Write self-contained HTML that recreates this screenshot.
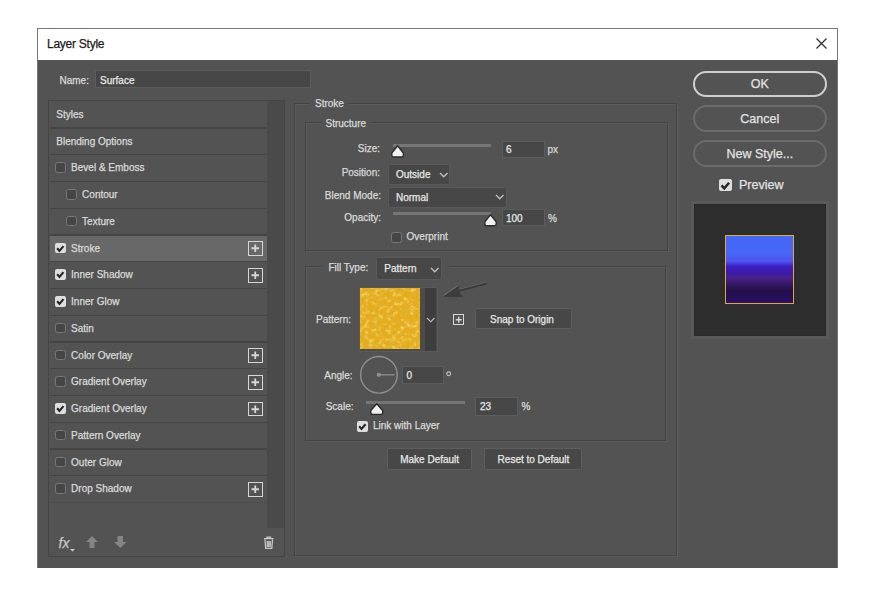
<!DOCTYPE html>
<html><head><meta charset="utf-8"><style>
html,body{margin:0;padding:0;background:#ffffff;}
body{width:875px;height:597px;position:relative;overflow:hidden;font-family:"Liberation Sans",sans-serif;}
div{-webkit-text-stroke:0.25px currentColor;}
</style></head><body>
<div style="position:absolute;left:37.00px;top:28.00px;width:801.00px;height:540.00px;box-sizing:border-box;background:#535353;border:1px solid #767676;border-bottom:none;"></div>
<div style="position:absolute;left:38.00px;top:29.00px;width:799.00px;height:31.00px;background:#ffffff;"></div>
<div style="position:absolute;top:38.14px;font-size:12px;line-height:12px;color:#1c1c1c;white-space:nowrap;letter-spacing:-0.25px;left:47.00px;">Layer Style</div>
<svg style="position:absolute;left:816.00px;top:38.00px;overflow:visible" width="11" height="11" viewBox="0 0 11 11"><path d="M0.5 0.5L10.5 10.5M10.5 0.5L0.5 10.5" stroke="#2b2b2b" stroke-width="1.2"/></svg>
<div style="position:absolute;top:75.53px;font-size:10px;line-height:10px;color:#dadada;white-space:nowrap;left:59.50px;">Name:</div>
<div style="position:absolute;left:95.00px;top:70.20px;width:216.00px;height:18.20px;box-sizing:border-box;background:#474747;border:1px solid #5c5c5c;"></div>
<div style="position:absolute;top:75.63px;font-size:10px;line-height:10px;color:#e8e8e8;white-space:nowrap;left:100.00px;">Surface</div>
<div style="position:absolute;left:48.00px;top:99.50px;width:237.00px;height:457.50px;box-sizing:border-box;border:1px solid #454545;"></div>
<div style="position:absolute;left:266.60px;top:101.00px;width:17.00px;height:427.00px;background:#4a4a4a;"></div>
<div style="position:absolute;left:50.00px;top:127.25px;width:216.60px;height:1.30px;background:#454545;"></div>
<div style="position:absolute;top:109.94px;font-size:10px;line-height:10px;color:#dadada;white-space:nowrap;left:56.30px;">Styles</div>
<div style="position:absolute;left:50.00px;top:154.00px;width:216.60px;height:1.30px;background:#454545;"></div>
<div style="position:absolute;top:136.69px;font-size:10px;line-height:10px;color:#dadada;white-space:nowrap;left:56.30px;">Blending Options</div>
<div style="position:absolute;left:50.00px;top:180.75px;width:216.60px;height:1.30px;background:#454545;"></div>
<div style="position:absolute;left:55.30px;top:162.30px;width:10.60px;height:10.60px;box-sizing:border-box;background:#464646;border:1.4px solid #787878;border-radius:2.5px;"></div>
<div style="position:absolute;top:163.44px;font-size:10px;line-height:10px;color:#dadada;white-space:nowrap;left:71.10px;">Bevel &amp; Emboss</div>
<div style="position:absolute;left:50.00px;top:207.50px;width:216.60px;height:1.30px;background:#454545;"></div>
<div style="position:absolute;left:66.30px;top:189.05px;width:10.60px;height:10.60px;box-sizing:border-box;background:#464646;border:1.4px solid #787878;border-radius:2.5px;"></div>
<div style="position:absolute;top:190.19px;font-size:10px;line-height:10px;color:#dadada;white-space:nowrap;left:82.10px;">Contour</div>
<div style="position:absolute;left:50.00px;top:234.25px;width:216.60px;height:1.30px;background:#454545;"></div>
<div style="position:absolute;left:66.30px;top:215.80px;width:10.60px;height:10.60px;box-sizing:border-box;background:#464646;border:1.4px solid #787878;border-radius:2.5px;"></div>
<div style="position:absolute;top:216.94px;font-size:10px;line-height:10px;color:#dadada;white-space:nowrap;left:82.10px;">Texture</div>
<div style="position:absolute;left:50.00px;top:235.75px;width:216.60px;height:25.75px;background:#686868;"></div>
<div style="position:absolute;left:50.00px;top:261.00px;width:216.60px;height:1.30px;background:#454545;"></div>
<div style="position:absolute;left:55.30px;top:242.55px;width:10.60px;height:10.60px;background:#dedede;border-radius:2px;"></div>
<svg style="position:absolute;left:55.30px;top:242.55px;overflow:visible" width="10.6" height="10.6" viewBox="0 0 10.6 10.6"><path d="M2.12 5.30 L4.45 7.84 L8.48 3.18" fill="none" stroke="#262626" stroke-width="2.12"/></svg>
<div style="position:absolute;top:243.69px;font-size:10px;line-height:10px;color:#dadada;white-space:nowrap;left:71.10px;">Stroke</div>
<div style="position:absolute;left:248.00px;top:241.25px;width:14.50px;height:14.50px;box-sizing:border-box;border:1.5px solid #d6d6d6;"></div>
<svg style="position:absolute;left:248.00px;top:241.25px;overflow:visible" width="14.5" height="14.5" viewBox="0 0 14.5 14.5"><path d="M3.48 7.25H11.02M7.25 3.48V11.02" stroke="#d6d6d6" stroke-width="1.8" fill="none"/></svg>
<div style="position:absolute;left:50.00px;top:287.75px;width:216.60px;height:1.30px;background:#454545;"></div>
<div style="position:absolute;left:55.30px;top:269.30px;width:10.60px;height:10.60px;background:#dedede;border-radius:2px;"></div>
<svg style="position:absolute;left:55.30px;top:269.30px;overflow:visible" width="10.6" height="10.6" viewBox="0 0 10.6 10.6"><path d="M2.12 5.30 L4.45 7.84 L8.48 3.18" fill="none" stroke="#262626" stroke-width="2.12"/></svg>
<div style="position:absolute;top:270.44px;font-size:10px;line-height:10px;color:#dadada;white-space:nowrap;left:71.10px;">Inner Shadow</div>
<div style="position:absolute;left:248.00px;top:268.00px;width:14.50px;height:14.50px;box-sizing:border-box;border:1.5px solid #d6d6d6;"></div>
<svg style="position:absolute;left:248.00px;top:268.00px;overflow:visible" width="14.5" height="14.5" viewBox="0 0 14.5 14.5"><path d="M3.48 7.25H11.02M7.25 3.48V11.02" stroke="#d6d6d6" stroke-width="1.8" fill="none"/></svg>
<div style="position:absolute;left:50.00px;top:314.50px;width:216.60px;height:1.30px;background:#454545;"></div>
<div style="position:absolute;left:55.30px;top:296.05px;width:10.60px;height:10.60px;background:#dedede;border-radius:2px;"></div>
<svg style="position:absolute;left:55.30px;top:296.05px;overflow:visible" width="10.6" height="10.6" viewBox="0 0 10.6 10.6"><path d="M2.12 5.30 L4.45 7.84 L8.48 3.18" fill="none" stroke="#262626" stroke-width="2.12"/></svg>
<div style="position:absolute;top:297.19px;font-size:10px;line-height:10px;color:#dadada;white-space:nowrap;left:71.10px;">Inner Glow</div>
<div style="position:absolute;left:50.00px;top:341.25px;width:216.60px;height:1.30px;background:#454545;"></div>
<div style="position:absolute;left:55.30px;top:322.80px;width:10.60px;height:10.60px;box-sizing:border-box;background:#464646;border:1.4px solid #787878;border-radius:2.5px;"></div>
<div style="position:absolute;top:323.94px;font-size:10px;line-height:10px;color:#dadada;white-space:nowrap;left:71.10px;">Satin</div>
<div style="position:absolute;left:50.00px;top:368.00px;width:216.60px;height:1.30px;background:#454545;"></div>
<div style="position:absolute;left:55.30px;top:349.55px;width:10.60px;height:10.60px;box-sizing:border-box;background:#464646;border:1.4px solid #787878;border-radius:2.5px;"></div>
<div style="position:absolute;top:350.69px;font-size:10px;line-height:10px;color:#dadada;white-space:nowrap;left:71.10px;">Color Overlay</div>
<div style="position:absolute;left:248.00px;top:348.25px;width:14.50px;height:14.50px;box-sizing:border-box;border:1.5px solid #d6d6d6;"></div>
<svg style="position:absolute;left:248.00px;top:348.25px;overflow:visible" width="14.5" height="14.5" viewBox="0 0 14.5 14.5"><path d="M3.48 7.25H11.02M7.25 3.48V11.02" stroke="#d6d6d6" stroke-width="1.8" fill="none"/></svg>
<div style="position:absolute;left:50.00px;top:394.75px;width:216.60px;height:1.30px;background:#454545;"></div>
<div style="position:absolute;left:55.30px;top:376.30px;width:10.60px;height:10.60px;box-sizing:border-box;background:#464646;border:1.4px solid #787878;border-radius:2.5px;"></div>
<div style="position:absolute;top:377.44px;font-size:10px;line-height:10px;color:#dadada;white-space:nowrap;left:71.10px;">Gradient Overlay</div>
<div style="position:absolute;left:248.00px;top:375.00px;width:14.50px;height:14.50px;box-sizing:border-box;border:1.5px solid #d6d6d6;"></div>
<svg style="position:absolute;left:248.00px;top:375.00px;overflow:visible" width="14.5" height="14.5" viewBox="0 0 14.5 14.5"><path d="M3.48 7.25H11.02M7.25 3.48V11.02" stroke="#d6d6d6" stroke-width="1.8" fill="none"/></svg>
<div style="position:absolute;left:50.00px;top:421.50px;width:216.60px;height:1.30px;background:#454545;"></div>
<div style="position:absolute;left:55.30px;top:403.05px;width:10.60px;height:10.60px;background:#dedede;border-radius:2px;"></div>
<svg style="position:absolute;left:55.30px;top:403.05px;overflow:visible" width="10.6" height="10.6" viewBox="0 0 10.6 10.6"><path d="M2.12 5.30 L4.45 7.84 L8.48 3.18" fill="none" stroke="#262626" stroke-width="2.12"/></svg>
<div style="position:absolute;top:404.19px;font-size:10px;line-height:10px;color:#dadada;white-space:nowrap;left:71.10px;">Gradient Overlay</div>
<div style="position:absolute;left:248.00px;top:401.75px;width:14.50px;height:14.50px;box-sizing:border-box;border:1.5px solid #d6d6d6;"></div>
<svg style="position:absolute;left:248.00px;top:401.75px;overflow:visible" width="14.5" height="14.5" viewBox="0 0 14.5 14.5"><path d="M3.48 7.25H11.02M7.25 3.48V11.02" stroke="#d6d6d6" stroke-width="1.8" fill="none"/></svg>
<div style="position:absolute;left:50.00px;top:448.25px;width:216.60px;height:1.30px;background:#454545;"></div>
<div style="position:absolute;left:55.30px;top:429.80px;width:10.60px;height:10.60px;box-sizing:border-box;background:#464646;border:1.4px solid #787878;border-radius:2.5px;"></div>
<div style="position:absolute;top:430.94px;font-size:10px;line-height:10px;color:#dadada;white-space:nowrap;left:71.10px;">Pattern Overlay</div>
<div style="position:absolute;left:50.00px;top:475.00px;width:216.60px;height:1.30px;background:#454545;"></div>
<div style="position:absolute;left:55.30px;top:456.55px;width:10.60px;height:10.60px;box-sizing:border-box;background:#464646;border:1.4px solid #787878;border-radius:2.5px;"></div>
<div style="position:absolute;top:457.69px;font-size:10px;line-height:10px;color:#dadada;white-space:nowrap;left:71.10px;">Outer Glow</div>
<div style="position:absolute;left:50.00px;top:501.75px;width:216.60px;height:1.30px;background:#4e4e4e;"></div>
<div style="position:absolute;left:55.30px;top:483.30px;width:10.60px;height:10.60px;box-sizing:border-box;background:#464646;border:1.4px solid #787878;border-radius:2.5px;"></div>
<div style="position:absolute;top:484.44px;font-size:10px;line-height:10px;color:#dadada;white-space:nowrap;left:71.10px;">Drop Shadow</div>
<div style="position:absolute;left:248.00px;top:482.00px;width:14.50px;height:14.50px;box-sizing:border-box;border:1.5px solid #d6d6d6;"></div>
<svg style="position:absolute;left:248.00px;top:482.00px;overflow:visible" width="14.5" height="14.5" viewBox="0 0 14.5 14.5"><path d="M3.48 7.25H11.02M7.25 3.48V11.02" stroke="#d6d6d6" stroke-width="1.8" fill="none"/></svg>
<div style="position:absolute;top:535.65px;font-size:14px;line-height:14px;color:#c8c8c8;white-space:nowrap;left:58.50px;font-family:"Liberation Serif",serif;"><i>fx</i></div>
<svg style="position:absolute;left:70.00px;top:548.50px;overflow:visible" width="5" height="2.5" viewBox="0 0 5 2.5"><path d="M0 0H5L2.5 2.5Z" fill="#d0d0d0"/></svg>
<svg style="position:absolute;left:86.00px;top:536.00px;overflow:visible" width="12" height="12" viewBox="0 0 12 12"><path d="M6 0L12 6H8.5V12H3.5V6H0Z" fill="#858585"/></svg>
<svg style="position:absolute;left:113.50px;top:536.00px;overflow:visible" width="12.5" height="12" viewBox="0 0 12.5 12"><path d="M6.25 12L12.5 6H9V0H3.5V6H0Z" fill="#858585"/></svg>
<svg style="position:absolute;left:262.50px;top:536.00px;overflow:visible" width="11.5" height="13" viewBox="0 0 11.5 13"><path d="M1 2.5H10.5M4 2.5V1H7.5V2.5M2 3.5L2.7 12.3H8.8L9.5 3.5M4.3 5V11M5.75 5V11M7.2 5V11" fill="none" stroke="#cacaca" stroke-width="1.25"/></svg>
<div style="position:absolute;left:294.20px;top:103.00px;width:383.30px;height:453.00px;box-sizing:border-box;border:1px solid #444444;box-shadow:inset 1px 1px 0 #5b5b5b, 1px 1px 0 #5b5b5b;"></div>
<div style="position:absolute;left:309.50px;top:100.00px;width:38.50px;height:10.00px;background:#535353;"></div>
<div style="position:absolute;top:99.33px;font-size:10px;line-height:10px;color:#dadada;white-space:nowrap;left:315.00px;">Stroke</div>
<div style="position:absolute;left:305.00px;top:122.20px;width:363.00px;height:129.30px;box-sizing:border-box;border:1px solid #444444;box-shadow:inset 1px 1px 0 #5b5b5b, 1px 1px 0 #5b5b5b;"></div>
<div style="position:absolute;left:321.00px;top:118.00px;width:49.00px;height:10.00px;background:#535353;"></div>
<div style="position:absolute;top:119.13px;font-size:10px;line-height:10px;color:#dadada;white-space:nowrap;left:325.50px;">Structure</div>
<div style="position:absolute;top:144.03px;font-size:10px;line-height:10px;color:#dadada;white-space:nowrap;right:495.00px;">Size:</div>
<div style="position:absolute;left:393.00px;top:143.90px;width:98.00px;height:3.00px;background:#767676;"></div>
<svg style="position:absolute;left:391.00px;top:145.00px;overflow:visible" width="13.199999999999989" height="12.800000000000011" viewBox="0 0 13.199999999999989 12.800000000000011"><path d="M6.60 0.8 L12.40 7.94 L12.40 10.30 Q12.40 12.00 10.70 12.00 L2.5 12.00 Q0.8 12.00 0.8 10.30 L0.8 7.94 Z" fill="#f0f0f0" stroke="#2c2c2c" stroke-width="1.4" stroke-linejoin="round"/></svg>
<div style="position:absolute;left:501.50px;top:140.50px;width:43.00px;height:17.50px;box-sizing:border-box;background:#474747;border:1px solid #5c5c5c;"></div>
<div style="position:absolute;top:145.03px;font-size:10px;line-height:10px;color:#e8e8e8;white-space:nowrap;left:506.00px;">6</div>
<div style="position:absolute;top:144.84px;font-size:10px;line-height:10px;color:#dadada;white-space:nowrap;left:547.50px;">px</div>
<div style="position:absolute;top:168.03px;font-size:10px;line-height:10px;color:#dadada;white-space:nowrap;right:495.00px;">Position:</div>
<div style="position:absolute;left:388.00px;top:164.00px;width:62.00px;height:20.50px;box-sizing:border-box;background:#474747;border:1px solid #5a5a5a;border-radius:2.5px;"></div>
<div style="position:absolute;top:169.84px;font-size:10px;line-height:10px;color:#e8e8e8;white-space:nowrap;left:396.00px;">Outside</div>
<svg style="position:absolute;left:439.55px;top:173.10px;overflow:visible" width="7.5" height="3.8" viewBox="0 0 7.5 3.8"><path d="M0 0L3.75 3.8L7.5 0" fill="none" stroke="#c0c0c0" stroke-width="1.35"/></svg>
<div style="position:absolute;top:190.53px;font-size:10px;line-height:10px;color:#dadada;white-space:nowrap;right:494.00px;">Blend Mode:</div>
<div style="position:absolute;left:388.00px;top:187.00px;width:118.50px;height:21.00px;box-sizing:border-box;background:#474747;border:1px solid #5a5a5a;border-radius:2.5px;"></div>
<div style="position:absolute;top:192.53px;font-size:10px;line-height:10px;color:#e8e8e8;white-space:nowrap;left:396.00px;">Normal</div>
<svg style="position:absolute;left:496.05px;top:195.10px;overflow:visible" width="7.5" height="3.8" viewBox="0 0 7.5 3.8"><path d="M0 0L3.75 3.8L7.5 0" fill="none" stroke="#c0c0c0" stroke-width="1.35"/></svg>
<div style="position:absolute;top:213.03px;font-size:10px;line-height:10px;color:#dadada;white-space:nowrap;right:494.00px;">Opacity:</div>
<div style="position:absolute;left:393.00px;top:211.70px;width:98.00px;height:3.00px;background:#767676;"></div>
<svg style="position:absolute;left:484.30px;top:213.50px;overflow:visible" width="13.0" height="12.5" viewBox="0 0 13.0 12.5"><path d="M6.50 0.8 L12.20 7.75 L12.20 10.00 Q12.20 11.70 10.50 11.70 L2.5 11.70 Q0.8 11.70 0.8 10.00 L0.8 7.75 Z" fill="#f0f0f0" stroke="#2c2c2c" stroke-width="1.4" stroke-linejoin="round"/></svg>
<div style="position:absolute;left:501.50px;top:208.50px;width:43.00px;height:17.50px;box-sizing:border-box;background:#474747;border:1px solid #5c5c5c;"></div>
<div style="position:absolute;top:213.84px;font-size:10px;line-height:10px;color:#e8e8e8;white-space:nowrap;left:506.00px;">100</div>
<div style="position:absolute;top:213.84px;font-size:10px;line-height:10px;color:#dadada;white-space:nowrap;left:548.00px;">%</div>
<div style="position:absolute;left:391.00px;top:232.00px;width:10.50px;height:10.50px;box-sizing:border-box;background:#464646;border:1.4px solid #787878;border-radius:2.5px;"></div>
<div style="position:absolute;top:231.53px;font-size:10px;line-height:10px;color:#dadada;white-space:nowrap;left:406.60px;">Overprint</div>
<div style="position:absolute;left:305.00px;top:265.50px;width:361.00px;height:175.00px;box-sizing:border-box;border:1px solid #444444;box-shadow:inset 1px 1px 0 #5b5b5b, 1px 1px 0 #5b5b5b;"></div>
<div style="position:absolute;left:322.00px;top:258.00px;width:127.00px;height:23.00px;background:#535353;"></div>
<div style="position:absolute;top:263.04px;font-size:10px;line-height:10px;color:#dadada;white-space:nowrap;left:328.40px;">Fill Type:</div>
<div style="position:absolute;left:375.80px;top:257.30px;width:66.40px;height:23.20px;box-sizing:border-box;background:#474747;border:1px solid #5a5a5a;border-radius:2.5px;"></div>
<div style="position:absolute;top:264.34px;font-size:10px;line-height:10px;color:#e8e8e8;white-space:nowrap;left:384.30px;">Pattern</div>
<svg style="position:absolute;left:431.25px;top:267.90px;overflow:visible" width="7.5" height="3.8" viewBox="0 0 7.5 3.8"><path d="M0 0L3.75 3.8L7.5 0" fill="none" stroke="#c0c0c0" stroke-width="1.35"/></svg>
<div style="position:absolute;top:315.04px;font-size:10px;line-height:10px;color:#dadada;white-space:nowrap;left:316.00px;">Pattern:</div>
<div style="position:absolute;left:358.60px;top:286.60px;width:79.60px;height:65.10px;box-sizing:border-box;background:#4c4c4c;border:1px solid #5a5a5a;"></div>
<svg style="position:absolute;left:360.00px;top:288.40px;overflow:visible" width="60" height="61" viewBox="0 0 60 61"><defs><filter id="tx" x="0" y="0" width="100%" height="100%"><feTurbulence type="fractalNoise" baseFrequency="0.22" numOctaves="3" seed="11"/><feColorMatrix type="matrix" values="0 0 0 0 0.97  0 0 0 0 0.8  0 0 0 0 0.24  2.2 0 0 0 -1.05"/></filter>
<filter id="tx2" x="0" y="0" width="100%" height="100%"><feTurbulence type="fractalNoise" baseFrequency="0.3" numOctaves="2" seed="3"/><feColorMatrix type="matrix" values="0 0 0 0 0.72  0 0 0 0 0.46  0 0 0 0 0.03  3 0 0 0 -1.3"/></filter></defs>
<rect width="60" height="61" fill="#e6aa1a"/><rect width="60" height="61" filter="url(#tx)"/><rect width="60" height="61" filter="url(#tx2)"/></svg>
<div style="position:absolute;left:425.20px;top:287.60px;width:11.30px;height:63.10px;background:#3e3e3e;"></div>
<svg style="position:absolute;left:427.05px;top:318.10px;overflow:visible" width="7.5" height="3.8" viewBox="0 0 7.5 3.8"><path d="M0 0L3.75 3.8L7.5 0" fill="none" stroke="#c0c0c0" stroke-width="1.1"/></svg>
<div style="position:absolute;left:452.90px;top:313.90px;width:11.50px;height:11.50px;box-sizing:border-box;border:1.1px solid #d8d8d8;"></div>
<svg style="position:absolute;left:452.90px;top:313.90px;overflow:visible" width="11.5" height="11.5" viewBox="0 0 11.5 11.5"><path d="M2.76 5.75H8.74M5.75 2.76V8.74" stroke="#d8d8d8" stroke-width="1.4000000000000001" fill="none"/></svg>
<div style="position:absolute;left:475.30px;top:307.50px;width:96.40px;height:21.90px;box-sizing:border-box;background:#474747;border:1px solid #5e5e5e;border-radius:2px;"></div>
<div style="position:absolute;top:314.94px;font-size:10px;line-height:10px;color:#e8e8e8;white-space:nowrap;left:490.00px;">Snap to Origin</div>
<svg style="position:absolute;left:440.00px;top:280.00px;overflow:visible" width="50" height="22" viewBox="0 0 50 22"><path d="M18 11L45.8 3.7" stroke="#727272" stroke-width="1" transform="translate(0,-1.1)"/><path d="M3.9 16.4L18.4 6.5" stroke="#767676" stroke-width="1" transform="translate(-0.6,-0.8)"/><path d="M18 11L45.8 3.7" stroke="#3c3c3c" stroke-width="2.2" stroke-linecap="round"/><path d="M3.9 16.4L18.4 6.5L18 11L22.4 16.7Z" fill="#3c3c3c" stroke="#3c3c3c" stroke-width="0.8" stroke-linejoin="round"/></svg>
<div style="position:absolute;top:370.54px;font-size:10px;line-height:10px;color:#dadada;white-space:nowrap;left:324.30px;">Angle:</div>
<svg style="position:absolute;left:359.00px;top:355.00px;overflow:visible" width="40" height="40" viewBox="0 0 40 40"><circle cx="19.9" cy="19.8" r="18.3" fill="none" stroke="#8f8f8f" stroke-width="1.4"/><circle cx="19.8" cy="19.8" r="2.1" fill="#8f8f8f"/><path d="M19.8 19.8H35.6" stroke="#8f8f8f" stroke-width="1.3"/></svg>
<div style="position:absolute;left:401.80px;top:365.60px;width:42.60px;height:18.10px;box-sizing:border-box;background:#474747;border:1px solid #5c5c5c;"></div>
<div style="position:absolute;top:370.54px;font-size:10px;line-height:10px;color:#e8e8e8;white-space:nowrap;left:406.60px;">0</div>
<svg style="position:absolute;left:446.00px;top:370.50px;overflow:visible" width="6" height="6" viewBox="0 0 6 6"><circle cx="2.7" cy="2.8" r="1.9" fill="none" stroke="#c4c4c4" stroke-width="1.1"/></svg>
<div style="position:absolute;top:402.34px;font-size:10px;line-height:10px;color:#dadada;white-space:nowrap;left:325.70px;">Scale:</div>
<div style="position:absolute;left:366.20px;top:401.10px;width:98.40px;height:3.00px;background:#767676;"></div>
<svg style="position:absolute;left:369.80px;top:403.00px;overflow:visible" width="13.5" height="12.199999999999989" viewBox="0 0 13.5 12.199999999999989"><path d="M6.75 0.8 L12.70 7.56 L12.70 9.70 Q12.70 11.40 11.00 11.40 L2.5 11.40 Q0.8 11.40 0.8 9.70 L0.8 7.56 Z" fill="#f0f0f0" stroke="#2c2c2c" stroke-width="1.4" stroke-linejoin="round"/></svg>
<div style="position:absolute;left:474.70px;top:397.40px;width:43.60px;height:18.30px;box-sizing:border-box;background:#474747;border:1px solid #5c5c5c;"></div>
<div style="position:absolute;top:401.84px;font-size:10px;line-height:10px;color:#e8e8e8;white-space:nowrap;left:479.90px;">23</div>
<div style="position:absolute;top:401.84px;font-size:10px;line-height:10px;color:#dadada;white-space:nowrap;left:521.40px;">%</div>
<div style="position:absolute;left:357.20px;top:421.00px;width:10.70px;height:10.70px;background:#dedede;border-radius:2px;"></div>
<svg style="position:absolute;left:357.20px;top:421.00px;overflow:visible" width="10.7" height="10.7" viewBox="0 0 10.7 10.7"><path d="M2.14 5.35 L4.49 7.92 L8.56 3.21" fill="none" stroke="#262626" stroke-width="2.14"/></svg>
<div style="position:absolute;top:420.84px;font-size:10px;line-height:10px;color:#dadada;white-space:nowrap;left:373.00px;">Link with Layer</div>
<div style="position:absolute;left:387.40px;top:448.30px;width:84.60px;height:21.60px;box-sizing:border-box;background:#474747;border:1px solid #5e5e5e;border-radius:2px;"></div>
<div style="position:absolute;top:454.74px;font-size:10px;line-height:10px;color:#e8e8e8;white-space:nowrap;left:400.20px;">Make Default</div>
<div style="position:absolute;left:483.50px;top:447.70px;width:98.80px;height:22.80px;box-sizing:border-box;background:#474747;border:1px solid #5e5e5e;border-radius:2px;"></div>
<div style="position:absolute;top:454.74px;font-size:10px;line-height:10px;color:#e8e8e8;white-space:nowrap;left:497.60px;">Reset to Default</div>
<div style="position:absolute;left:692.90px;top:70.60px;width:133.70px;height:26.20px;box-sizing:border-box;border:2px solid #cfcfcf;border-radius:14px;"></div>
<div style="position:absolute;top:78.02px;font-size:12.5px;line-height:12.5px;color:#e2e2e2;white-space:nowrap;left:759.80px;transform:translateX(-50%);">OK</div>
<div style="position:absolute;left:692.90px;top:105.00px;width:133.70px;height:26.60px;box-sizing:border-box;border:2px solid #6c6c6c;border-radius:14px;"></div>
<div style="position:absolute;top:112.72px;font-size:12.5px;line-height:12.5px;color:#e2e2e2;white-space:nowrap;left:759.80px;transform:translateX(-50%);">Cancel</div>
<div style="position:absolute;left:692.90px;top:140.20px;width:133.70px;height:26.50px;box-sizing:border-box;border:2px solid #6c6c6c;border-radius:14px;"></div>
<div style="position:absolute;top:147.92px;font-size:12.5px;line-height:12.5px;color:#e2e2e2;white-space:nowrap;left:759.80px;transform:translateX(-50%);">New Style...</div>
<div style="position:absolute;left:719.40px;top:178.50px;width:12.60px;height:12.60px;background:#dedede;border-radius:2px;"></div>
<svg style="position:absolute;left:719.40px;top:178.50px;overflow:visible" width="12.6" height="12.6" viewBox="0 0 12.6 12.6"><path d="M2.52 6.30 L5.29 9.32 L10.08 3.78" fill="none" stroke="#262626" stroke-width="2.52"/></svg>
<div style="position:absolute;top:178.92px;font-size:12.5px;line-height:12.5px;color:#e2e2e2;white-space:nowrap;left:739.00px;">Preview</div>
<div style="position:absolute;left:690.50px;top:201.00px;width:138.50px;height:138.00px;background:#595959;"></div>
<div style="position:absolute;left:694.00px;top:204.00px;width:131.50px;height:131.50px;background:#2d2d2d;box-shadow:inset 0 0 0 1px #292929;"></div>
<div style="position:absolute;left:725.40px;top:235.10px;width:69.00px;height:68.90px;box-sizing:border-box;border:1.5px solid #e3a93a;background:linear-gradient(to bottom,#4466f4 0%,#4768f6 25%,#5052f0 38%,#3a20c4 45%,#3c1aa8 55%,#48218e 62%,#341660 73%,#22104a 82%,#240f55 90%,#2b0e6c 100%);"></div>
</body></html>
